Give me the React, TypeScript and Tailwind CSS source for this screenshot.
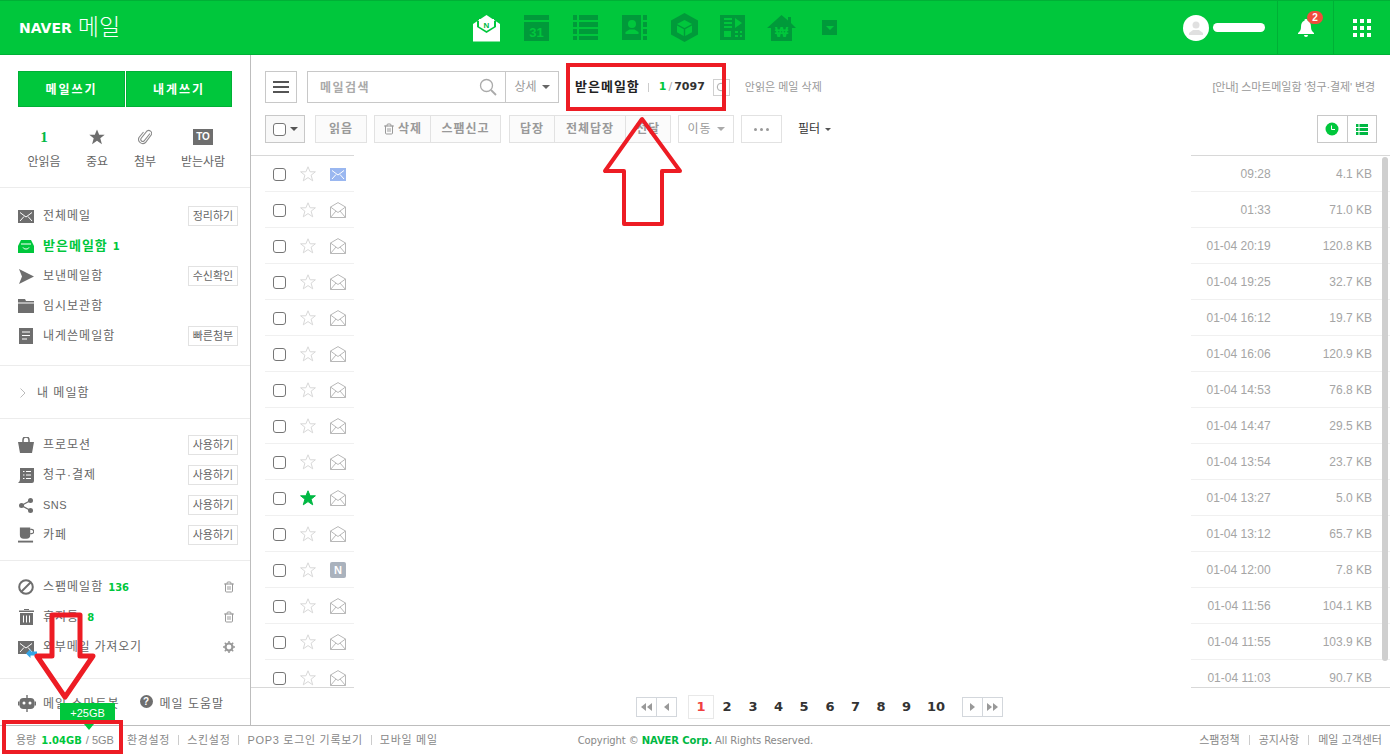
import { RotateCw, Trash2 } from 'lucide-react'

const mono = "font-['DejaVu_Sans','Noto_Sans_CJK_KR',sans-serif]"

const rows = [
  { icon: 'new', time: '09:28', size: '4.1 KB' },
  { icon: 'open', time: '01:33', size: '71.0 KB' },
  { icon: 'open', time: '01-04 20:19', size: '120.8 KB' },
  { icon: 'open', time: '01-04 19:25', size: '32.7 KB' },
  { icon: 'open', time: '01-04 16:12', size: '19.7 KB' },
  { icon: 'open', time: '01-04 16:06', size: '120.9 KB' },
  { icon: 'open', time: '01-04 14:53', size: '76.8 KB' },
  { icon: 'open', time: '01-04 14:47', size: '29.5 KB' },
  { icon: 'open', time: '01-04 13:54', size: '23.7 KB' },
  { icon: 'open', time: '01-04 13:27', size: '5.0 KB', star: true },
  { icon: 'open', time: '01-04 13:12', size: '65.7 KB' },
  { icon: 'naver', time: '01-04 12:00', size: '7.8 KB' },
  { icon: 'open', time: '01-04 11:56', size: '104.1 KB' },
  { icon: 'open', time: '01-04 11:55', size: '103.9 KB' },
  { icon: 'open', time: '01-04 11:03', size: '90.7 KB' },
]

function Star({ on }: { on?: boolean }) {
  return (
    <svg width="16" height="16" viewBox="0 0 16 16">
      <path
        d="M8 .8l2.100 5h5.300l-4.300 3.400 1.600 5.600L8 11.600l-4.700 3.200 1.600-5.600L.6 5.800h5.300z"
        fill={on ? '#00b843' : 'white'}
        stroke={on ? '#00b843' : '#d8d8d8'}
        strokeWidth="1"
      />
    </svg>
  )
}

function RowIcon({ type }: { type: string }) {
  if (type === 'new') {
    return (
      <svg width="16" height="13" viewBox="0 0 16 13">
        <rect width="16" height="13" fill="#9ab7f0" />
        <path d="M2 2.500l6 4.500 6-4.500M2 11l4-4.500M14 11l-4-4.500" stroke="white" strokeWidth="1" fill="none" />
      </svg>
    )
  }
  if (type === 'naver') {
    return (
      <div className="flex h-4 w-4 items-center justify-center rounded-[2px] bg-[#aab2bd] text-[11px] font-bold text-white">
        N
      </div>
    )
  }
  return (
    <svg width="16" height="16" viewBox="0 0 16 16">
      <path
        d="M.5 5L8 .6 15.500 5v10.500H.5zM.5 5L8 10.500 15.500 5M.5 15.500L6 9M15.500 15.500L10 9"
        fill="none"
        stroke="#b8b8b8"
        strokeWidth="1"
      />
    </svg>
  )
}

function Check() {
  return <div className="h-[13px] w-[13px] rounded-[3px] border border-[#767676] bg-white" />
}

function HeaderIcons() {
  const d = '#009a3a'
  return (
    <div className="flex items-center">
      <svg width="27" height="28" viewBox="0 0 27 28" className="mr-[24px]">
        <path d="M13.500 1L27 10v17.500H0V10z" fill="white" />
        <path d="M4 7h19v6l-9.500 6L4 13z" fill="#00c73c" />
        <path d="M6 5h15v7.500l-7.500 4.500L6 12.500z" fill="white" />
        <text x="13.500" y="14" textAnchor="middle" fontSize="8" fontWeight="bold" fill="#00b843" fontFamily="Liberation Sans">N</text>
      </svg>
      <svg width="25" height="26" viewBox="0 0 25 26" className="mr-[24px]">
        <rect width="25" height="5" fill={d} />
        <rect y="7" width="25" height="19" fill={d} />
        <text x="12.500" y="22" textAnchor="middle" fontSize="13" fontWeight="bold" fill="#00c73c" fontFamily="Liberation Sans">31</text>
      </svg>
      <svg width="25" height="25" viewBox="0 0 25 25" className="mr-[24px]">
        <path d="M0 0h4v5H0zM6 0h19v5H6zM0 7h4v5H0zM6 7h19v5H6zM0 14h4v5H0zM6 14h19v5H6zM0 21h4v4H0zM6 21h19v4H6z" fill={d} />
      </svg>
      <svg width="25" height="25" viewBox="0 0 25 25" className="mr-[24px]">
        <path d="M0 0h19v25H0zM21 0h4v5h-4zM21 7h4v5h-4zM21 14h4v5h-4zM21 21h4v4h-4z" fill={d} />
        <circle cx="10" cy="9" r="4" fill="#00c73c" />
        <path d="M3.500 19v-2l4-2.500h5l4 2.500v2z" fill="#00c73c" />
      </svg>
      <svg width="27" height="29" viewBox="0 0 27 29" className="mr-[22px]">
        <path d="M13.500 0L27 7.500v14L13.500 29 0 21.500v-14z" fill={d} />
        <path d="M13.500 7L21 11l-7.500 4L6 11z" fill="#00c73c" />
        <path d="M6 12.500l6.800 3.700V23L6 19.200zM21 12.500l-6.800 3.700V23l6.800-3.800z" fill="#00c73c" />
      </svg>
      <svg width="25" height="25" viewBox="0 0 25 25" className="mr-[22px]">
        <rect width="25" height="25" fill={d} />
        <path d="M4 3h8v2H4zM4 7h8v2H4zM4 11h8v2H4zM15 3l7 5-7 5zM4 16h7v6H4zM15 16h3v2h-3zM20 16h2v2h-2zM15 20h3v2h-3zM20 20h2v2h-2z" fill="#00c73c" />
      </svg>
      <svg width="29" height="26" viewBox="0 0 29 26" className="mr-[26px]">
        <path d="M14.500 0L21 5.500V2h3v6l5 5h-4v13H4V13H0z" fill={d} />
        <text x="14.500" y="22" textAnchor="middle" fontSize="14" fontWeight="bold" fill="#00c73c" fontFamily="Liberation Sans">₩</text>
      </svg>
      <div className="flex h-[15px] w-[15px] items-center justify-center bg-[#009a3a]">
        <div className="h-0 w-0 border-x-[4px] border-t-[4px] border-x-transparent border-t-[#00c73c]" />
      </div>
    </div>
  )
}

function Header() {
  return (
    <header className="relative flex h-[55px] shrink-0 items-center border-y border-[#00b036] bg-[#00c73c]">
      <div className="ml-[19px] flex w-[440px] items-center gap-[6px] text-white">
        <span className="font-['DejaVu_Sans',sans-serif] text-[14px] leading-none font-bold">NAVER</span>
        <span className="text-[23px] leading-none font-light">메일</span>
      </div>
      <div className="ml-[14px]">
        <HeaderIcons />
      </div>
      <div className="ml-auto flex h-full items-center">
        <div className="flex h-full w-[151px] items-center border-r border-[#00b036] pl-[56px]">
          <div className="flex h-[26px] w-[26px] items-center justify-center rounded-full bg-white">
            <svg width="14" height="14" viewBox="0 0 14 14">
              <circle cx="7" cy="4" r="3.500" fill="#e0e0e0" />
              <path d="M0 14v-2l4-3h6l4 3v2z" fill="#e0e0e0" />
            </svg>
          </div>
          <div className="ml-[4px] h-[9px] w-[52px] rounded-full bg-white" />
        </div>
        <div className="relative flex h-full w-[56px] items-center justify-center border-r border-[#00b036]">
          <svg width="16" height="18" viewBox="0 0 16 18">
            <path d="M8 0a1.500 1.500 0 011.500 1.800C12 2.500 13 5 13 8c0 3 1 4.500 3 6v1H0v-1c2-1.500 3-3 3-6 0-3 1-5.500 3.500-6.200A1.500 1.500 0 018 0zM6 16h4a2 2 0 01-4 0z" fill="white" />
          </svg>
          <div className="absolute top-[10px] left-[29px] flex h-[13px] w-[16px] items-center justify-center rounded-full bg-[#f04c3c] text-[10px] font-bold text-white">
            2
          </div>
        </div>
        <div className="flex h-full w-[56px] items-center justify-center">
          <div className="grid grid-cols-3 gap-[3px]">
            {Array.from({ length: 9 }).map((_, i) => (
              <div key={i} className="h-[4px] w-[4px] bg-white" />
            ))}
          </div>
        </div>
      </div>
    </header>
  )
}

const gray = '#6e6e6e'

const navTop = [
  {
    label: '전체메일',
    btn: '정리하기',
    icon: (
      <svg width="16" height="13" viewBox="0 0 16 13">
        <rect width="16" height="13" fill={gray} />
        <path d="M2 2.500l6 4.500 6-4.500M2 11l4-4.500M14 11l-4-4.500" stroke="white" fill="none" />
      </svg>
    ),
  },
  {
    label: '받은메일함',
    active: true,
    count: '1',
    icon: (
      <svg width="16" height="13" viewBox="0 0 16 13">
        <path d="M3 0h10l3 6v7H0V6z" fill="#00c73c" />
        <path d="M3 4h10M5 7.500c1 2 5 2 6 0" stroke="white" fill="none" />
      </svg>
    ),
  },
  {
    label: '보낸메일함',
    btn: '수신확인',
    icon: (
      <svg width="16" height="15" viewBox="0 0 16 15">
        <path d="M1 0l15 7.500L1 15l3-7.500z" fill={gray} />
      </svg>
    ),
  },
  {
    label: '임시보관함',
    icon: (
      <svg width="16" height="14" viewBox="0 0 16 14">
        <path d="M0 0h7l1 2h8v1.500H0zM0 4.500h16V14H0z" fill={gray} />
      </svg>
    ),
  },
  {
    label: '내게쓴메일함',
    btn: '빠른첨부',
    icon: (
      <svg width="16" height="16" viewBox="0 0 16 16">
        <rect x="1" width="14" height="16" fill={gray} />
        <path d="M4 4h8M4 7.500h8M4 11h5" stroke="white" />
      </svg>
    ),
  },
]

const navApps = [
  {
    label: '프로모션',
    icon: (
      <svg width="16" height="16" viewBox="0 0 16 16">
        <path d="M0 5h16l-2 11H2z" fill={gray} />
        <path d="M5 6V3a3 3 0 016 0v3" stroke={gray} strokeWidth="1.500" fill="none" />
      </svg>
    ),
  },
  {
    label: '청구·결제',
    icon: (
      <svg width="16" height="15" viewBox="0 0 16 15">
        <path d="M2 0h14v13a2 2 0 01-2 2H0c1-1 2-2 2-4z" fill={gray} />
        <path d="M5 3.500h1.500M8 3.500h5M5 7h1.500M8 7h5M5 10.500h1.500M8 10.500h5" stroke="white" />
      </svg>
    ),
  },
  {
    label: 'SNS',
    icon: (
      <svg width="14" height="15" viewBox="0 0 14 15">
        <circle cx="11.500" cy="2.500" r="2.500" fill={gray} />
        <circle cx="2.500" cy="7.500" r="2.500" fill={gray} />
        <circle cx="11.500" cy="12.500" r="2.500" fill={gray} />
        <path d="M11.500 2.500l-9 5 9 5" stroke={gray} strokeWidth="1.300" fill="none" />
      </svg>
    ),
  },
  {
    label: '카페',
    icon: (
      <svg width="17" height="16" viewBox="0 0 17 16">
        <path d="M2 0h11v8a4 4 0 01-4 4H6a4 4 0 01-4-4z" fill={gray} />
        <path d="M13 2h1.500a1.800 1.800 0 010 4.500H13" stroke={gray} strokeWidth="1.300" fill="none" />
        <rect y="14" width="16" height="2" fill={gray} />
      </svg>
    ),
  },
]

function SideBtn({ children }: { children: string }) {
  return (
    <span className="flex h-[20px] w-[50px] items-center justify-center border border-[#e2e2e2] text-[11px] text-[#666]">
      {children}
    </span>
  )
}

function NavRow({
  icon,
  label,
  right,
  active,
}: {
  icon: React.ReactNode
  label: React.ReactNode
  right?: React.ReactNode
  active?: boolean
}) {
  return (
    <div className="flex h-[30px] items-center pr-[12px] pl-[18px]">
      <span className="flex w-[16px] justify-center">{icon}</span>
      <span className={`ml-[9px] ${active ? 'text-[13px] font-bold tracking-[1px] text-[#00c73c]' : 'text-[12px] tracking-[1px] text-[#666]'}`}>
        {label}
      </span>
      <span className="ml-auto flex items-center">{right}</span>
    </div>
  )
}

function Sidebar() {
  return (
    <aside className="flex w-[251px] shrink-0 flex-col border-r border-[#bdbdbd]">
      <div className="h-[133px] shrink-0 border-b border-[#ececec] px-[18px] pt-[16px]">
        <div className="flex h-[36px] gap-px text-[12px] font-bold tracking-[2px] text-white">
          <div className="flex flex-[107] items-center justify-center border border-[#00b036] bg-[#00c73c] pt-px">메일쓰기</div>
          <div className="flex flex-[106] items-center justify-center border border-[#00b036] bg-[#00c73c] pt-px">내게쓰기</div>
        </div>
        <div className="mt-[22px] -mr-[8px] flex text-[12px] text-[#666]">
          <div className="flex w-[52px] shrink-0 flex-col items-center gap-[8px]">
            <span className="flex h-[16px] items-center font-['Liberation_Serif',serif] text-[15px] font-bold text-[#00b843]">1</span>
            <span>안읽음</span>
          </div>
          <div className="flex w-[54px] shrink-0 flex-col items-center gap-[8px]">
            <svg width="16" height="16" viewBox="0 0 16 16">
              <path d="M8 .5l2.200 5.200h5.500l-4.400 3.500 1.600 6L8 11.800l-4.900 3.400 1.600-6L.3 5.700h5.500z" fill={gray} />
            </svg>
            <span>중요</span>
          </div>
          <div className="flex w-[42px] shrink-0 flex-col items-center gap-[8px]">
            <svg width="14" height="16" viewBox="0 0 14 16">
              <path d="M12 4.500L6 12a2 2 0 01-3-2.500L9 2a3 3 0 014.500 3.500L7.500 13.500A4.200 4.200 0 011 8.500L5.500 3" stroke="#8a8a8a" strokeWidth="1.100" fill="none" />
            </svg>
            <span>첨부</span>
          </div>
          <div className="flex w-[74px] shrink-0 flex-col items-center gap-[8px]">
            <span className="flex h-[16px] w-[20px] items-center justify-center bg-[#6e6e6e] text-[10px] leading-none font-bold text-white">TO</span>
            <span>받는사람</span>
          </div>
        </div>
      </div>

      <div className="h-[178px] shrink-0 border-b border-[#ececec] pt-[13px]">
        {navTop.map((n) => (
          <NavRow
            key={n.label}
            icon={n.icon}
            active={n.active}
            label={
              <>
                {n.label}
                {n.count && <span className={`${mono} ml-[5px] text-[10px] font-bold`}>{n.count}</span>}
              </>
            }
            right={n.btn && <SideBtn>{n.btn}</SideBtn>}
          />
        ))}
      </div>

      <div className="flex h-[53px] shrink-0 items-center border-b border-[#ececec] pt-[2px] pl-[20px] text-[12px] tracking-[1px] text-[#666]">
        <svg width="6" height="10" viewBox="0 0 6 10">
          <path d="M.5.500L5 5 .5 9.500" stroke="#bbb" fill="none" />
        </svg>
        <span className="ml-[11px]">내 메일함</span>
      </div>

      <div className="h-[142px] shrink-0 border-b border-[#ececec] pt-[11px]">
        {navApps.map((n) => (
          <NavRow
            key={n.label}
            icon={n.icon}
            label={n.label === 'SNS' ? <span className="text-[11px] tracking-[0.5px]">SNS</span> : n.label}
            right={<SideBtn>사용하기</SideBtn>}
          />
        ))}
      </div>

      <div className="h-[118px] shrink-0 border-b border-[#ececec] pt-[11px]">
        <NavRow
          icon={
            <svg width="16" height="16" viewBox="0 0 16 16">
              <circle cx="8" cy="8" r="6.800" stroke={gray} strokeWidth="2" fill="none" />
              <path d="M3.500 12.500l9-9" stroke={gray} strokeWidth="2" />
            </svg>
          }
          label={
            <>
              스팸메일함<span className={`${mono} ml-[5px] text-[10px] font-bold tracking-normal text-[#00c73c]`}>136</span>
            </>
          }
          right={<Trash2 size={12} className="mr-[3px] text-[#999]" />}
        />
        <NavRow
          icon={
            <svg width="15" height="16" viewBox="0 0 15 16">
              <path d="M0 1.500h15V3H0zM5 0h5v1H5zM1 4h13v12H1z" fill={gray} />
              <path d="M4.500 6.500v7M7.500 6.500v7M10.500 6.500v7" stroke="white" />
            </svg>
          }
          label={
            <>
              휴지통<span className={`${mono} ml-[8px] text-[10px] font-bold text-[#00c73c]`}>8</span>
            </>
          }
          right={<Trash2 size={12} className="mr-[3px] text-[#999]" />}
        />
        <NavRow
          icon={
            <span className="relative block h-[13px] w-[16px]">
              <svg width="16" height="13" viewBox="0 0 16 13" className="block">
                <rect width="16" height="13" fill={gray} />
                <path d="M2 2.500l6 4.500 6-4.500M2 11l4-4.500M14 11l-4-4.500" stroke="white" fill="none" />
              </svg>
              <svg width="11" height="9" viewBox="0 0 11 9" className="absolute top-[8px] left-[8px]">
                <path d="M0 4.500L4.500 0v2.500H11v4H4.500V9z" fill="#36a5e6" />
              </svg>
            </span>
          }
          label={<span className="tracking-[0.8px]">외부메일 가져오기</span>}
          right={
            <svg width="12" height="12" viewBox="0 0 12 12" className="mr-[3px]">
              <circle cx="6" cy="6" r="3.500" stroke="#999" strokeWidth="2.200" fill="none" />
              <path d="M6 0v2M6 10v2M0 6h2M10 6h2M1.800 1.800l1.400 1.400M8.800 8.800l1.400 1.400M1.800 10.200l1.400-1.400M8.800 3.200l1.400-1.400" stroke="#999" strokeWidth="1.500" />
            </svg>
          }
        />
      </div>

      <div className="flex flex-1 items-start pt-[16px] pl-[18px] text-[12px] tracking-[1px] text-[#666]">
        <svg width="18" height="17" viewBox="0 0 18 17">
          <rect x="1.500" y="3" width="15" height="11" rx="4" fill={gray} />
          <rect y="6.500" width="1.500" height="4" fill={gray} />
          <rect x="16.500" y="6.500" width="1.500" height="4" fill={gray} />
          <rect x="8.300" y="0" width="1.400" height="3" fill={gray} />
          <rect x="8.300" y="14" width="1.400" height="3" fill={gray} />
          <circle cx="6" cy="8" r="1.500" fill="white" />
          <circle cx="12" cy="8" r="1.500" fill="white" />
        </svg>
        <span className="ml-[7px]">메일 스마트봇</span>
        <span className="ml-[20px] flex h-[13px] w-[13px] items-center justify-center rounded-full bg-[#6e6e6e] text-[10px] font-bold tracking-normal text-white">?</span>
        <span className="ml-[7px]">메일 도움말</span>
      </div>
    </aside>
  )
}

function ToolBtn({ children, className = '' }: { children: React.ReactNode; className?: string }) {
  return (
    <div className={`flex h-[28px] items-center justify-center border border-[#e2e2e2] bg-[#fbfbfb] text-[12px] font-bold tracking-[1px] text-[#999] ${className}`}>
      {children}
    </div>
  )
}

const caret = 'h-0 w-0 border-x-[4px] border-t-[4px] border-x-transparent'

function Toolbar() {
  return (
    <div className="h-[100px] shrink-0 pt-[16px] pr-[14px] pl-[14px]">
      <div className="flex h-[32px] items-center">
        <div className="flex h-[32px] w-[32px] flex-col items-center justify-center gap-[3px] border border-[#c8c8c8]">
          <div className="h-[2px] w-[16px] bg-[#555]" />
          <div className="h-[2px] w-[16px] bg-[#555]" />
          <div className="h-[2px] w-[16px] bg-[#555]" />
        </div>
        <div className="ml-[10px] flex h-[32px] w-[252px] items-center border border-[#c8c8c8] text-[12px]">
          <span className="ml-[12px] pt-px font-bold tracking-[1.500px] text-[#aaa]">메일검색</span>
          <svg width="18" height="18" viewBox="0 0 18 18" className="mr-[8px] ml-auto">
            <circle cx="7.500" cy="7.500" r="6" stroke="#aaa" strokeWidth="1.300" fill="none" />
            <path d="M12 12l5 5" stroke="#aaa" strokeWidth="1.800" />
          </svg>
          <div className="flex h-full w-[53px] items-center justify-center gap-[5px] border-l border-[#c8c8c8] text-[#999]">
            상세 <div className={`${caret} border-t-[#666]`} />
          </div>
        </div>
        <span className="ml-[16px] text-[13px] font-bold tracking-[1px] text-[#222]">받은메일함</span>
        <span className="ml-[8px] h-[9px] w-px bg-[#ccc]" />
        <span className={`${mono} ml-[10px] text-[11px] font-bold text-[#333]`}>
          <span className="text-[#00c73c]">1</span>
          <span className="mx-[2px] font-normal text-[#aaa]">/</span>7097
        </span>
        <span className="ml-[8px] flex h-[17px] w-[17px] items-center justify-center border border-[#d0d0d0] text-[#999]">
          <RotateCw size={10} />
        </span>
        <span className="ml-[15px] text-[11px] text-[#999]">안읽은 메일 삭제</span>
        <span className="mr-[1px] ml-auto text-[11px] tracking-[-0.1px] text-[#999]">[안내] 스마트메일함 '청구·결제' 변경</span>
      </div>
      <div className="mt-[12px] flex items-center">
        <div className="flex h-[28px] w-[40px] items-center justify-center gap-[4px] border border-[#c8c8c8] bg-[#f8f8f8]">
          <Check />
          <div className={`${caret} border-t-[#555]`} />
        </div>
        <ToolBtn className="ml-[10px] w-[52px]">읽음</ToolBtn>
        <ToolBtn className="ml-[7px] w-[57px] gap-[3px]">
          <Trash2 size={12} /> 삭제
        </ToolBtn>
        <ToolBtn className="-ml-px w-[71px]">스팸신고</ToolBtn>
        <ToolBtn className="ml-[8px] w-[46px]">답장</ToolBtn>
        <ToolBtn className="-ml-px w-[72px]">전체답장</ToolBtn>
        <ToolBtn className="-ml-px w-[46px]">전달</ToolBtn>
        <ToolBtn className="ml-[7px] w-[56px] gap-[5px] bg-white font-normal">
          이동 <div className={`${caret} border-t-[#aaa]`} />
        </ToolBtn>
        <ToolBtn className="ml-[7px] w-[41px] gap-[3px] bg-white">
          <span className="h-[3px] w-[3px] rounded-full bg-[#999]" />
          <span className="h-[3px] w-[3px] rounded-full bg-[#999]" />
          <span className="h-[3px] w-[3px] rounded-full bg-[#999]" />
        </ToolBtn>
        <span className="ml-[16px] flex items-center gap-[5px] text-[12px] text-[#333]">
          필터 <div className="h-0 w-0 border-x-[3px] border-t-[3px] border-x-transparent border-t-[#555]" />
        </span>
        <div className="mr-[-1px] ml-auto flex h-[28px] w-[60px] border border-[#c8c8c8]">
          <div className="flex flex-1 items-center justify-center border-r border-[#c8c8c8]">
            <svg width="14" height="14" viewBox="0 0 14 14">
              <circle cx="7" cy="7" r="6.500" fill="#00c73c" />
              <path d="M6.500 3.500V7.500H10" stroke="white" fill="none" />
            </svg>
          </div>
          <div className="flex flex-1 items-center justify-center">
            <svg width="12" height="11" viewBox="0 0 12 11">
              <path d="M0 0h2.500v3H0zM3.500 0H12v3H3.500zM0 4h2.500v3H0zM3.500 4H12v3H3.500zM0 8h2.500v3H0zM3.500 8H12v3H3.500z" fill="#00b843" />
            </svg>
          </div>
        </div>
      </div>
    </div>
  )
}

function MailList() {
  return (
    <div className="relative flex min-h-0 flex-1">
      <div className="w-[103px] shrink-0 overflow-hidden border-y border-[#d8d8d8] pl-[14px]">
        {rows.map((r, i) => (
          <div key={i} className="flex h-[36px] items-center border-b border-[#f0f0f0] pt-px">
            <span className="ml-[8px]">
              <Check />
            </span>
            <span className="ml-[14px]">
              <Star on={r.star} />
            </span>
            <span className="ml-[14px] flex w-[16px] items-center">
              <RowIcon type={r.icon} />
            </span>
          </div>
        ))}
      </div>
      <div className="flex-1" />
      <div className="w-[199px] shrink-0 overflow-hidden border-y border-[#d8d8d8]">
        {rows.map((r, i) => (
          <div key={i} className="flex h-[36px] items-center justify-end border-b border-[#f0f0f0] pt-px pr-[18px] text-[12px] text-[#a5a5a5]">
            <span className="w-[80px] text-right">{r.time}</span>
            <span className="w-[102px] text-right">{r.size}</span>
          </div>
        ))}
      </div>
      <div className="absolute top-[2px] right-[2px] h-[504px] w-[6px] rounded-full bg-[#cfcfcf]" />
    </div>
  )
}

const pages = [
  { n: '2', w: 'w-[26px]' },
  { n: '3', w: 'w-[26px]' },
  { n: '4', w: 'w-[25px]' },
  { n: '5', w: 'w-[26px]' },
  { n: '6', w: 'w-[26px]' },
  { n: '7', w: 'w-[25px]' },
  { n: '8', w: 'w-[26px]' },
  { n: '9', w: 'w-[25px]' },
  { n: '10', w: 'w-[34px]' },
]

function Arrow({ flip, double }: { flip?: boolean; double?: boolean }) {
  return (
    <div className={`flex flex-1 items-center justify-center gap-px ${flip ? 'rotate-180' : ''}`}>
      {double && <div className="h-0 w-0 border-y-[4px] border-r-[5px] border-y-transparent border-r-[#999]" />}
      <div className="h-0 w-0 border-y-[4px] border-r-[5px] border-y-transparent border-r-[#999]" />
    </div>
  )
}

function Pagination() {
  return (
    <div className={`${mono} flex h-[37px] shrink-0 items-center pt-px pl-[385px] text-[13px] font-bold text-[#333]`}>
      <div className="flex h-[20px] w-[41px] border border-[#d3d7dc]">
        <Arrow double />
        <div className="w-px bg-[#d3d7dc]" />
        <Arrow />
      </div>
      <div className="ml-[11px] flex h-[24px] w-[26px] items-center justify-center border border-[#e8e8e8] text-[#f04040]">1</div>
      {pages.map((p) => (
        <span key={p.n} className={`${p.w} text-center`}>
          {p.n}
        </span>
      ))}
      <div className="ml-[9px] flex h-[20px] w-[41px] border border-[#d3d7dc]">
        <Arrow flip />
        <div className="w-px bg-[#d3d7dc]" />
        <Arrow flip double />
      </div>
    </div>
  )
}

function Footer() {
  const sep = <span className="mx-[8px] h-[10px] w-px bg-[#ccc]" />
  const sepWide = <span className="mx-[9px] h-[10px] w-px bg-[#ccc]" />
  return (
    <footer className="relative flex h-[29px] shrink-0 items-center border-t border-[#bdbdbd] pr-[8px] pl-[16px] text-[11px] text-[#888]">
      <span>용량</span>
      <span className={`${mono} ml-[5px] text-[10px] font-bold text-[#00c73c]`}>1.04GB</span>
      <span className="ml-[4px]">/ 5GB</span>
      <span className="ml-[13px] tracking-[0.7px]">환경설정</span>
      {sep}
      <span className="tracking-[0.7px]">스킨설정</span>
      {sep}
      <span className="tracking-[0.7px]">POP3 로그인 기록보기</span>
      {sep}
      <span className="tracking-[0.7px]">모바일 메일</span>
      <span className={`${mono} ml-[140px] text-[10px] tracking-[-0.1px]`}>
        Copyright © <b className="text-[#00b843]">NAVER Corp.</b> All Rights Reserved.
      </span>
      <span className="ml-auto">스팸정책</span>
      {sepWide}
      <span>공지사항</span>
      {sepWide}
      <span>메일 고객센터</span>
    </footer>
  )
}

function Annotations() {
  return (
    <>
      <div className="absolute top-[63px] left-[566px] h-[48px] w-[160px] border-[4px] border-[#ed1c24]" />
      <svg width="90" height="114" viewBox="0 0 90 114" className="absolute top-[114px] left-[597px]">
        <path d="M45 5L8 57h19v53h38V57h18z" fill="none" stroke="#ed1c24" strokeWidth="4" strokeLinejoin="round" />
      </svg>
      <svg width="70" height="92" viewBox="0 0 70 92" className="absolute top-[610px] left-[30px]">
        <path d="M22 46V5h28v41H63L35 87 7 46z" fill="none" stroke="#ed1c24" strokeWidth="5" strokeLinejoin="round" />
      </svg>
      <div className="absolute top-[703px] left-[60px] flex h-[20px] w-[55px] items-center justify-center bg-[#00c73c] text-[11px] text-white">
        +25GB
      </div>
      <div className="absolute top-[720px] left-[2px] h-[34px] w-[121px] border-[4px] border-[#ed1c24]" />
      <div className="absolute top-[724px] left-[84px] h-0 w-0 border-x-[5px] border-t-[6px] border-x-transparent border-t-[#00c73c]" />
    </>
  )
}

export default function App() {
  return (
    <div className="relative flex h-[754px] w-[1390px] flex-col overflow-hidden bg-white font-['Liberation_Sans','Noto_Sans_CJK_KR',sans-serif]">
      <Header />
      <div className="flex min-h-0 flex-1">
        <Sidebar />
        <main className="flex min-w-0 flex-1 flex-col">
          <Toolbar />
          <MailList />
          <Pagination />
        </main>
      </div>
      <Footer />
      <Annotations />
    </div>
  )
}
